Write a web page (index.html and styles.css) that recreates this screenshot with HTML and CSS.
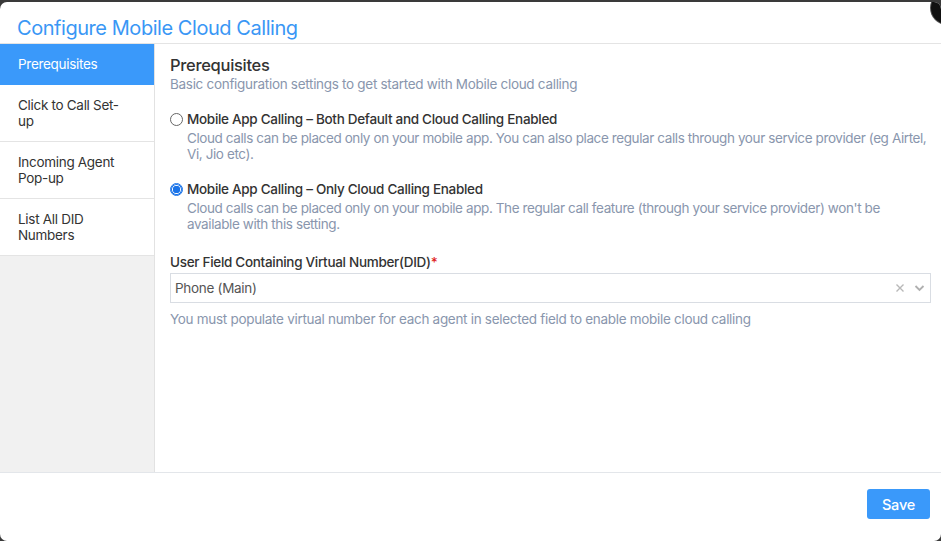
FILE: index.html
```html
<!DOCTYPE html>
<html lang="en">
<head>
<meta charset="utf-8">
<title>Configure Mobile Cloud Calling</title>
<link rel="stylesheet" href="styles.css">
</head>
<body>
<div class="modal">
  <span class="close-dot"></span>
  <header class="modal-header">
    <h1 class="modal-title">Configure Mobile Cloud Calling</h1>
  </header>
  <div class="modal-body">
    <nav class="sidebar">
      <a class="nav-item active">Prerequisites</a>
      <a class="nav-item">Click to Call Set-up</a>
      <a class="nav-item">Incoming Agent Pop-up</a>
      <a class="nav-item">List All DID Numbers</a>
    </nav>
    <section class="content">
      <h2 class="section-title">Prerequisites</h2>
      <p class="section-sub">Basic configuration settings to get started with Mobile cloud calling</p>

      <div class="option">
        <span class="radio"></span>
        <div class="option-text">
          <div class="option-label">Mobile App Calling – Both Default and Cloud Calling Enabled</div>
          <div class="option-desc">Cloud calls can be placed only on your mobile app. You can also place regular calls through your service provider (eg Airtel, Vi, Jio etc).</div>
        </div>
      </div>

      <div class="option">
        <span class="radio checked"></span>
        <div class="option-text">
          <div class="option-label">Mobile App Calling – Only Cloud Calling Enabled</div>
          <div class="option-desc">Cloud calls can be placed only on your mobile app. The regular call feature (through your service provider) won't be available with this setting.</div>
        </div>
      </div>

      <div class="field">
        <label class="field-label">User Field Containing Virtual Number(DID)<span class="req">*</span></label>
        <div class="select">
          <span class="select-value">Phone (Main)</span>
          <span class="select-icons">
            <svg class="icon-x" width="10" height="10" viewBox="0 0 10 10"><path d="M1.5 1.5 L8.5 8.5 M8.5 1.5 L1.5 8.5" stroke="#b8b8b8" stroke-width="1.4" fill="none"/></svg>
            <svg class="icon-chev" width="11" height="8" viewBox="0 0 11 8"><path d="M1.5 2 L5.5 6 L9.5 2" stroke="#b0b0b0" stroke-width="1.8" fill="none"/></svg>
          </span>
        </div>
        <p class="field-help">You must populate virtual number for each agent in selected field to enable mobile cloud calling</p>
      </div>
    </section>
  </div>
  <footer class="modal-footer">
    <button class="btn-save">Save</button>
  </footer>
</div>
</body>
</html>
```

FILE: styles.css
```css
html, body {
  margin: 0;
  padding: 0;
  height: 100%;
}
body {
  background: #3a3a3a;
  font-family: Inter, "Noto Sans", sans-serif;
  font-size: 13.5px;
  letter-spacing: -0.3px;
  color: #333;
  overflow: hidden;
}
.modal {
  position: relative;
  margin-top: 2px;
  height: 539px;
  background: #fff;
  border-radius: 7px;
  display: flex;
  flex-direction: column;
  overflow: hidden;
}
.close-dot {
  position: absolute;
  top: -10px;
  right: -22px;
  width: 32px;
  height: 32px;
  border-radius: 50%;
  background: #111;
  box-shadow: 0 0 0 1px #555;
}
.modal-header {
  height: 42px;
  border-bottom: 1px solid #e4e4e4;
  display: flex;
  align-items: center;
  padding-left: 17px;
  box-sizing: border-box;
}
.modal-title {
  margin: 0;
  font-size: 20px;
  font-weight: 400;
  color: #3a97f5;
  padding-top: 10px;
  letter-spacing: -0.45px;
}
.modal-body {
  flex: 1;
  display: flex;
  min-height: 0;
}
.sidebar {
  width: 154px;
  background: #f1f1f1;
  border-right: 1px solid #e2e2e2;
  display: flex;
  flex-direction: column;
}
.nav-item {
  display: block;
  background: #fff;
  padding: 12px 28px 12px 18px;
  line-height: 16px;
  font-size: 13.5px;
  color: #333;
  border-bottom: 1px solid #e4e4e4;
}
.nav-item.active {
  background: #3a99fa;
  color: #fff;
  border-bottom-color: #3a99fa;
}
.content {
  flex: 1;
  padding: 11px 10px 0 15px;
}
.section-title {
  margin: 0;
  font-size: 16.5px;
  font-weight: 500;
  line-height: 20px;
  letter-spacing: -0.3px;
  color: #333;
}
.section-sub {
  margin: 0;
  line-height: 18px;
  color: #8996ad;
}
.option {
  display: flex;
  align-items: flex-start;
  margin-top: 18px;
}
.option + .option {
  margin-top: 19px;
}
.radio {
  flex: none;
  width: 11px;
  height: 11px;
  border: 1px solid #666;
  border-radius: 50%;
  margin-top: 2px;
  margin-right: 4px;
  background: #fff;
}
.radio.checked {
  border-color: #1a73e8;
  background: radial-gradient(circle, #1a73e8 0 3.5px, #fff 4px);
  box-shadow: inset 0 0 0 1px #1a73e8;
}
.option-label {
  font-weight: 500;
  line-height: 16px;
  color: #333;
}
.option-desc {
  margin-top: 3px;
  line-height: 16px;
  letter-spacing: -0.4px;
  color: #8996ad;
}
.field {
  margin-top: 22px;
}
.field-label {
  display: block;
  font-weight: 500;
  line-height: 16px;
  color: #333;
}
.req {
  color: #e02020;
}
.select {
  margin-top: 3px;
  height: 30px;
  box-sizing: border-box;
  border: 1px solid #d9dde3;
  display: flex;
  align-items: center;
  justify-content: space-between;
  padding: 0 5px 0 4px;
}
.select-value {
  color: #555;
}
.select-icons {
  display: flex;
  align-items: center;
  gap: 9px;
}
.field-help {
  margin: 8px 0 0;
  line-height: 16px;
  color: #8996ad;
}
.modal-footer {
  height: 69px;
  border-top: 1px solid #e3e6ea;
  display: flex;
  justify-content: flex-end;
  align-items: flex-start;
  padding: 16px 11px 0 0;
  box-sizing: border-box;
}
.btn-save {
  width: 63px;
  height: 30px;
  border: none;
  border-radius: 3px;
  background: #3a99fa;
  color: #fff;
  font-family: Inter, "Noto Sans", sans-serif;
  font-size: 14.5px;
  font-weight: 500;
  letter-spacing: -0.2px;
  cursor: pointer;
}
```
